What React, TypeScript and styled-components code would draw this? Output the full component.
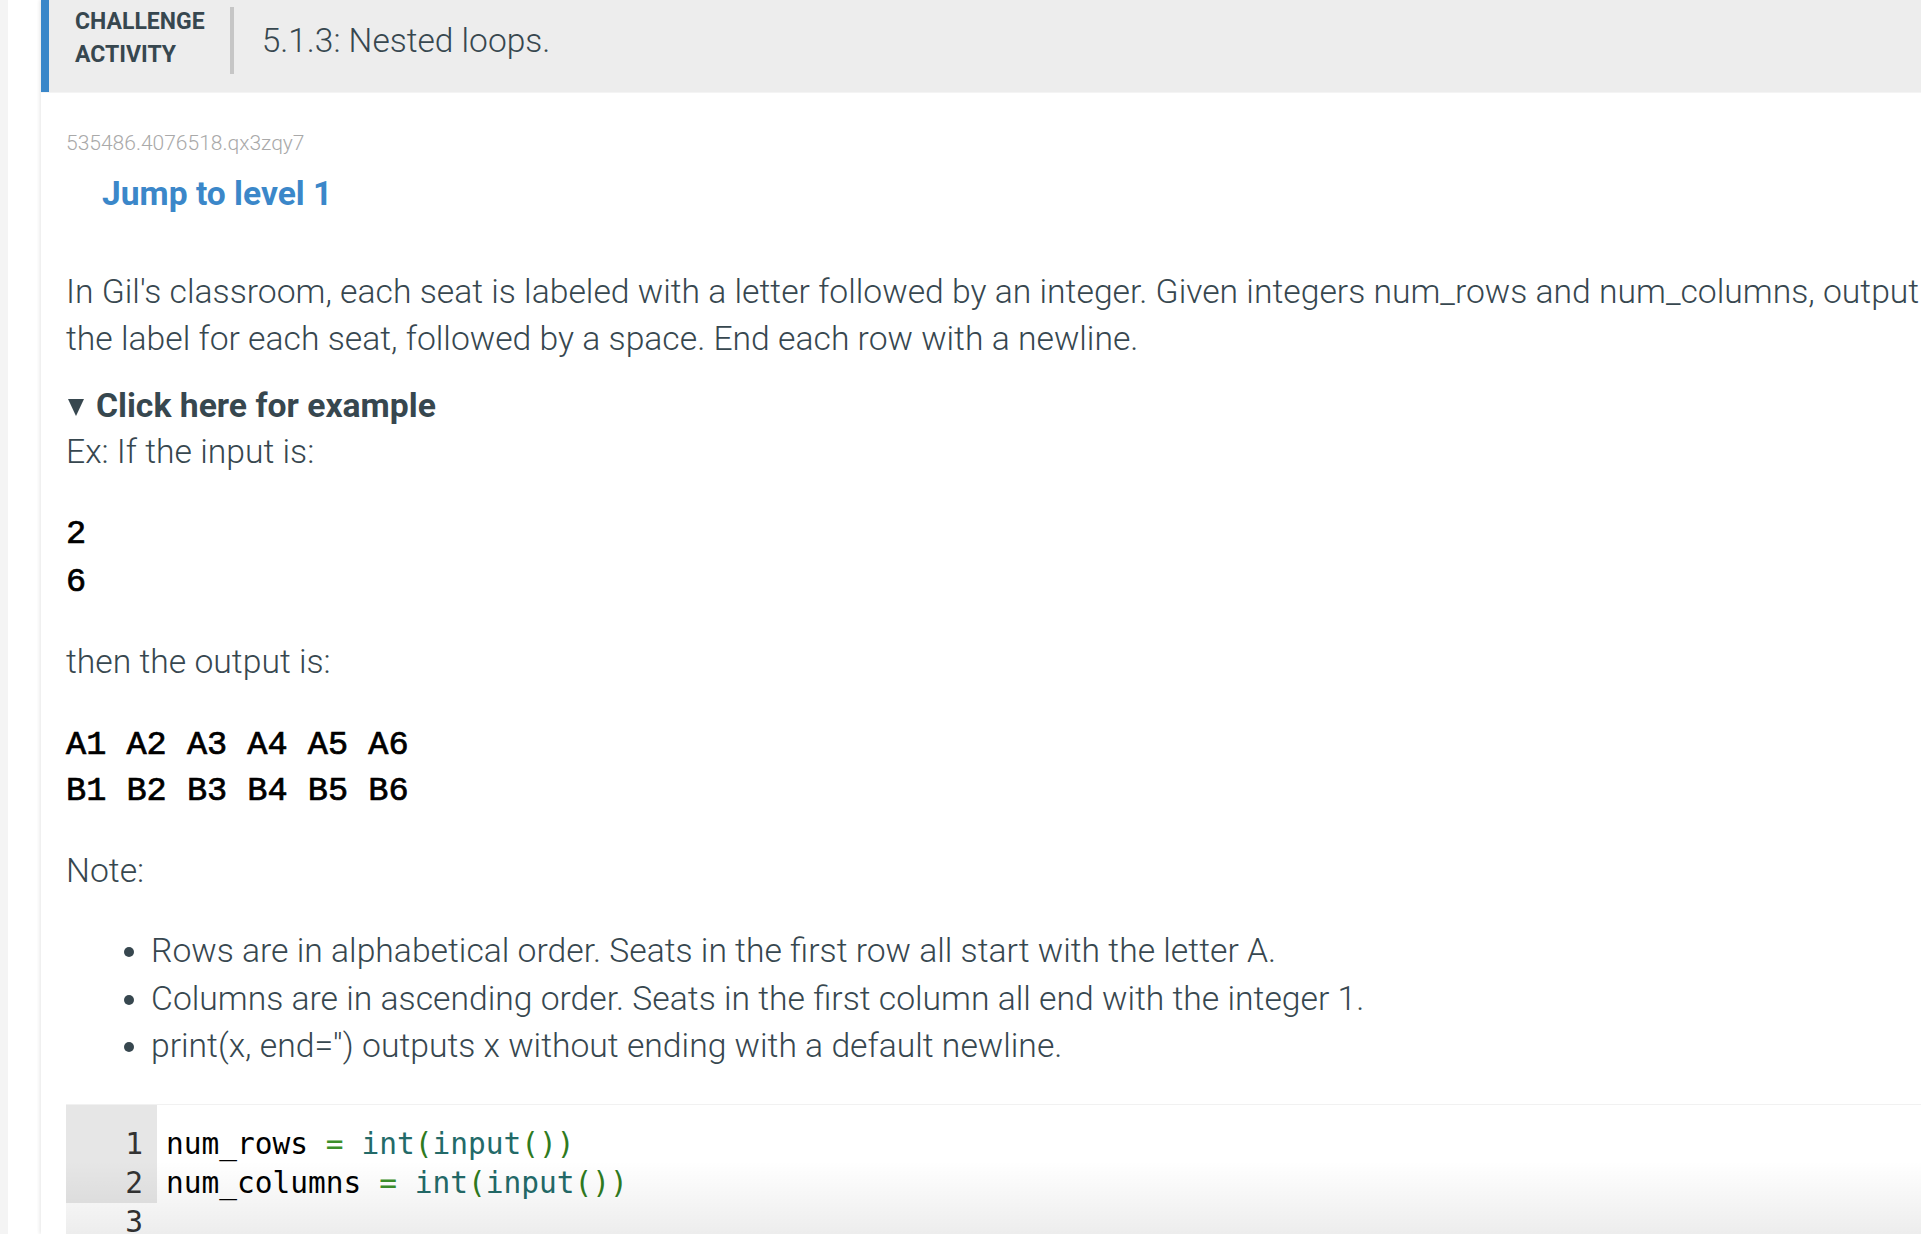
import React from "react";
import styled, { createGlobalStyle } from "styled-components";

const Global = createGlobalStyle`
  html, body {
    margin: 0;
    padding: 0;
    background: #ffffff;
    overflow: hidden;
  }
  body {
    font-family: Roboto, "Liberation Sans", Arial, sans-serif;
    color: #37474f;
  }
`;

const Page = styled.div`
  display: flex;
  height: 1234px;
  overflow: hidden;
  background: #ffffff;
`;

const SideStrip = styled.div`
  flex: 0 0 8px;
  background: #f4f4f4;
`;

const Main = styled.main`
  flex: 1 0 auto;
  display: flex;
  padding-left: 33px;
`;

const Card = styled.section`
  flex: 0 0 1960px;
  background: #ffffff;
  box-shadow: -2px 0 3px rgba(0, 0, 0, 0.07);
`;

const Header = styled.header`
  box-sizing: border-box;
  display: flex;
  align-items: center;
  height: 92px;
  padding: 0 0 11px 26px;
  background: #ededed;
  border-left: 8px solid #3a87c9;
  box-shadow: 0 1px 0 #f4f4f4;
`;

const Label = styled.div`
  margin-bottom: 5px;
  font-size: 23px;
  font-weight: 700;
  line-height: 33px;
  color: #37474f;
  text-transform: uppercase;
`;

const Divider = styled.div`
  width: 4px;
  height: 67px;
  margin: 0 28px 0 25px;
  background: #c6c6c6;
`;

const Title = styled.h1`
  margin: 0;
  font-size: 33.5px;
  font-weight: 300;
  line-height: 40px;
  color: #37474f;
`;

const Body = styled.div`
  padding: 39px 0 0 25px;
`;

const ActivityId = styled.div`
  font-size: 21px;
  line-height: 24px;
  font-weight: 300;
  color: #a9a9a9;
`;

const JumpLink = styled.a`
  display: block;
  margin: 19px 0 0 36px;
  font-size: 33.6px;
  font-weight: 700;
  line-height: 40px;
  color: #3b87c9;
  text-decoration: none;
`;

const Text = styled.p<{ $mt: number; $lh?: number }>`
  margin: ${(p) => p.$mt}px 0 0;
  font-size: 33.7px;
  font-weight: 300;
  line-height: ${(p) => p.$lh ?? 47}px;
  color: #37474f;
  white-space: nowrap;
`;

const Example = styled.details`
  margin-top: 21px;
`;

const Summary = styled.summary`
  display: flex;
  align-items: center;
  list-style: none;
  font-size: 33.7px;
  font-weight: 700;
  line-height: 46px;
  color: #37474f;
  cursor: pointer;
  &::-webkit-details-marker {
    display: none;
  }
  svg {
    margin: 2px 12px 0 2px;
  }
`;

const Pre = styled.pre<{ $mt: number; $lh: number }>`
  margin: ${(p) => p.$mt}px 0 0;
  font-family: "Courier New", "Nimbus Mono PS", "FreeMono", "Liberation Mono", monospace;
  font-size: 33.6px;
  font-weight: 400;
  -webkit-text-stroke: 0.7px #000000;
  line-height: ${(p) => p.$lh}px;
  color: #000000;
`;

const Bullets = styled.ul`
  margin: 33px 0 0;
  padding-left: 85px;
  font-size: 33.7px;
  font-weight: 300;
  line-height: 47.5px;
  color: #37474f;
  white-space: nowrap;
`;

const Editor = styled.div`
  position: relative;
  display: flex;
  margin-top: 34px;
  border-top: 1px solid #f1f1f1;
  font-family: "DejaVu Sans Mono", "Liberation Mono", monospace;
  font-size: 29.5px;
  line-height: 39px;
  &::after {
    content: "";
    position: absolute;
    left: 0;
    right: 0;
    top: 56px;
    height: 80px;
    background: linear-gradient(rgba(0, 0, 0, 0), rgba(0, 0, 0, 0.08));
    pointer-events: none;
  }
`;

const Gutter = styled.div`
  flex: 0 0 91px;
  display: flex;
  flex-direction: column;
  text-align: right;
  color: #333333;
`;

const GutterLocked = styled.div`
  padding: 20px 14px 0 0;
  background: #e6e6e6;
`;

const GutterNum = styled.div<{ $pad?: boolean }>`
  padding-right: ${(p) => (p.$pad ? 14 : 0)}px;
`;

const Code = styled.div`
  flex: 1;
  padding: 20px 0 0 9px;
  color: #000000;
  white-space: pre;
`;

const Tok = styled.span<{ $c: string }>`
  color: ${(p) => p.$c};
`;

const EQ = "#3d8f2b";
const FN = "#236a68";
const PAREN = "#2f7b1e";

const Triangle = () => (
  <svg width="16" height="17" viewBox="0 0 16 17" aria-hidden="true">
    <polygon points="0,0 16,0 8,17" fill="#37474f" />
  </svg>
);

const CodeLine = ({ name }: { name: string }) => (
  <div>
    {name} <Tok $c={EQ}>=</Tok> <Tok $c={FN}>int</Tok>
    <Tok $c={PAREN}>(</Tok>
    <Tok $c={FN}>input</Tok>
    <Tok $c={PAREN}>())</Tok>
  </div>
);

export default function App() {
  return (
    <>
      <Global />
      <Page>
        <SideStrip />
        <Main>
          <Card>
            <Header>
              <Label>
                Challenge
                <br />
                Activity
              </Label>
              <Divider />
              <Title>5.1.3: Nested loops.</Title>
            </Header>
            <Body>
              <ActivityId>535486.4076518.qx3zqy7</ActivityId>
              <JumpLink href="#level1">Jump to level 1</JumpLink>
              <Text $mt={54}>
                In Gil's classroom, each seat is labeled with a letter followed by an integer. Given integers
                num_rows and num_columns, output
                <br />
                the label for each seat, followed by a space. End each row with a newline.
              </Text>
              <Example open>
                <Summary>
                  <Triangle />
                  Click here for example
                </Summary>
                <Text $mt={0} $lh={46}>
                  Ex: If the input is:
                </Text>
                <Pre $mt={35} $lh={48}>
                  {"2\n6"}
                </Pre>
                <Text $mt={32}>then the output is:</Text>
                <Pre $mt={37} $lh={46}>
                  {"A1 A2 A3 A4 A5 A6\nB1 B2 B3 B4 B5 B6"}
                </Pre>
                <Text $mt={33}>Note:</Text>
                <Bullets>
                  <li>Rows are in alphabetical order. Seats in the first row all start with the letter A.</li>
                  <li>Columns are in ascending order. Seats in the first column all end with the integer 1.</li>
                  <li>print(x, end='') outputs x without ending with a default newline.</li>
                </Bullets>
              </Example>
              <Editor>
                <Gutter>
                  <GutterLocked>
                    <div>1</div>
                    <div>2</div>
                  </GutterLocked>
                  <GutterNum $pad>3</GutterNum>
                </Gutter>
                <Code>
                  <CodeLine name="num_rows" />
                  <CodeLine name="num_columns" />
                  <div> </div>
                </Code>
              </Editor>
            </Body>
          </Card>
        </Main>
      </Page>
    </>
  );
}
